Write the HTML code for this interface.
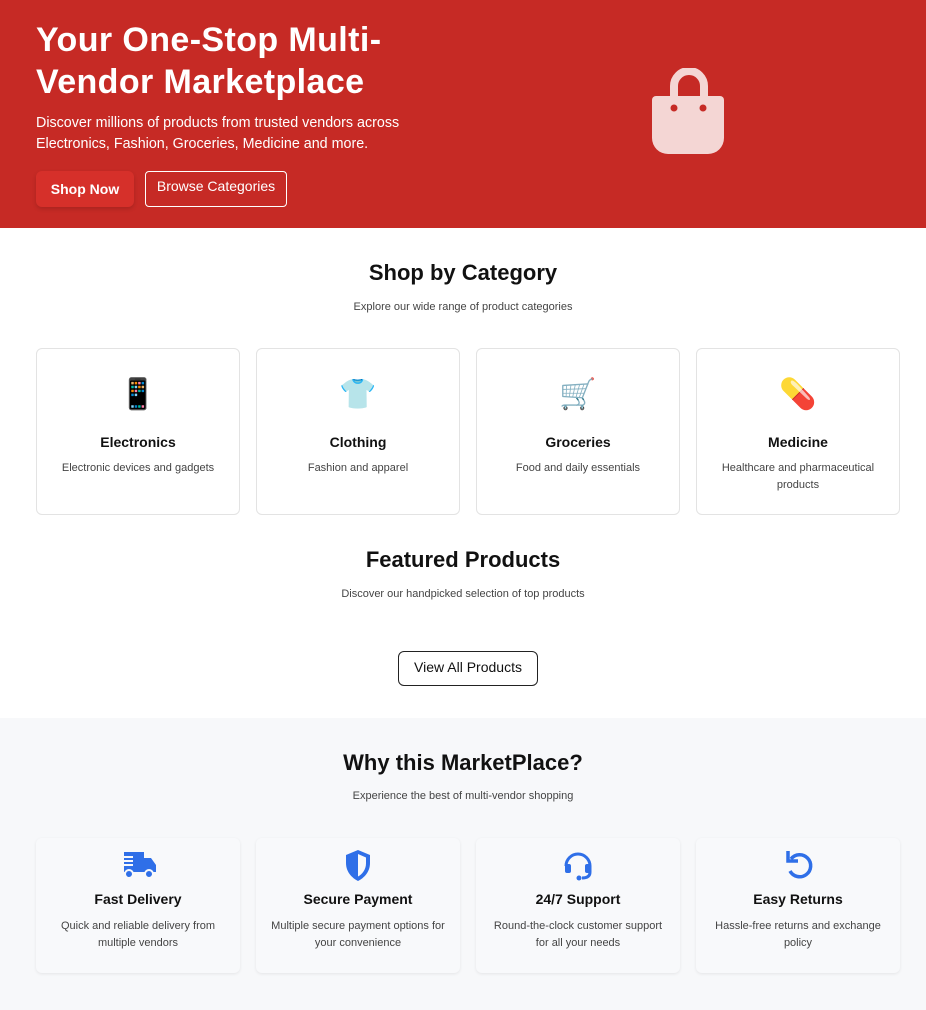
<!DOCTYPE html>
<html><head><meta charset="utf-8"><style>
*{box-sizing:border-box;margin:0;padding:0}
body{width:926px;height:1010px;font-family:"Liberation Sans",sans-serif;background:#fff;color:#111;overflow:hidden}
.hero{height:228px;background:#c62a25;position:relative;color:#fff}
.hero h1{position:absolute;left:36px;top:19px;font-size:34px;line-height:42px;font-weight:700;letter-spacing:0.4px;width:420px}
.hero p{position:absolute;left:36px;top:113px;font-size:14.3px;line-height:21px;width:400px}
.btn1{position:absolute;left:36px;top:171px;width:98px;height:36px;background:#d6302a;border-radius:6px;font-weight:700;font-size:14px;display:flex;align-items:center;justify-content:center;box-shadow:0 2px 4px rgba(0,0,0,.15)}
.btn2{position:absolute;left:145px;top:171px;width:142px;height:36px;border:1.5px solid #fff;border-radius:4px;font-size:14px;display:flex;align-items:center;justify-content:center;padding-bottom:6px}
h2{text-align:center;font-size:22px;font-weight:700;position:absolute;left:0;width:926px}
.sub{text-align:center;font-size:11px;color:#444;position:absolute;left:0;width:926px}
.cat{position:absolute;top:348px;width:204px;height:167px;border:1px solid #e3e3e3;border-radius:6px;text-align:center}
.cat .ic{font-size:30px;margin-top:28px;height:40px;font-family:"DejaVu Sans",sans-serif}
.cat b{display:block;font-size:14px;margin-top:17px;font-weight:600}
.cat span{display:block;font-size:11px;color:#444;margin-top:10px;line-height:17px;padding:0 18px}
.va{position:absolute;left:398px;top:651px;width:140px;height:35px;border:1px solid #222;border-radius:6px;font-size:14px;display:flex;align-items:center;justify-content:center;padding-bottom:4px}
.why{position:absolute;top:718px;left:0;width:926px;height:292px;background:#f7f8fa}
.f{position:absolute;top:838px;width:204px;height:135px;background:#f8f9fb;border-radius:6px;box-shadow:0 1px 3px rgba(0,0,0,.08);text-align:center}
.f svg{margin-top:10px}
.f b{display:block;font-size:14px;margin-top:4px}
.f span{display:block;font-size:11px;color:#444;margin-top:11px;line-height:17px;padding:0 10px}
</style></head><body>
<div class="hero">
<h1>Your One-Stop Multi-Vendor Marketplace</h1>
<p>Discover millions of products from trusted vendors across Electronics, Fashion, Groceries, Medicine and more.</p>
<div class="btn1">Shop Now</div>
<div class="btn2">Browse Categories</div>
<svg style="position:absolute;left:650px;top:68px" width="78" height="88" viewBox="0 0 78 88"><path d="M24 30V18a15 15 0 0 1 30 0v12" fill="none" stroke="#f4d6d4" stroke-width="8"/><path d="M8 28h62a4 4 0 0 1 4 4v38a16 16 0 0 1-16 16H18A16 16 0 0 1 2 70V32a4 4 0 0 1 4-4z" fill="#f4d6d4"/><circle cx="24" cy="40" r="3.5" fill="#c62a25"/><circle cx="53" cy="40" r="3.5" fill="#c62a25"/></svg>
</div>
<h2 style="top:260px">Shop by Category</h2>
<div class="sub" style="top:301px">Explore our wide range of product categories</div>
<div class="cat" style="left:36px"><div class="ic">📱</div><b>Electronics</b><span>Electronic devices and gadgets</span></div>
<div class="cat" style="left:256px"><div class="ic">👕</div><b>Clothing</b><span>Fashion and apparel</span></div>
<div class="cat" style="left:476px"><div class="ic">🛒</div><b>Groceries</b><span>Food and daily essentials</span></div>
<div class="cat" style="left:696px"><div class="ic">💊</div><b>Medicine</b><span>Healthcare and pharmaceutical products</span></div>
<h2 style="top:547px">Featured Products</h2>
<div class="sub" style="top:588px">Discover our handpicked selection of top products</div>
<div class="va">View All Products</div>
<div class="why"></div>
<h2 style="top:750px">Why this MarketPlace?</h2>
<div class="sub" style="top:790px">Experience the best of multi-vendor shopping</div>
<div class="f" style="left:36px"><svg width="40" height="34" viewBox="0 0 40 34"><path d="M6 4h20v20H6zM26 10h7l5 7v7H26z" fill="#2f6fe8"/><circle cx="11" cy="26" r="4" fill="#2f6fe8" stroke="#f8f9fb" stroke-width="2"/><circle cx="31" cy="26" r="4" fill="#2f6fe8" stroke="#f8f9fb" stroke-width="2"/><path d="M1 9h14M1 13h14M1 17h14" stroke="#f8f9fb" stroke-width="2"/></svg><b>Fast Delivery</b><span>Quick and reliable delivery from multiple vendors</span></div>
<div class="f" style="left:256px"><svg width="40" height="34" viewBox="0 0 40 34"><path d="M20 2l12 5v8c0 9-6 15-12 18C14 30 8 24 8 15V7z" fill="#2f6fe8"/><path d="M20 6l8 3.5v6c0 6-4 11-8 13z" fill="#f8f9fb"/></svg><b>Secure Payment</b><span>Multiple secure payment options for your convenience</span></div>
<div class="f" style="left:476px"><svg width="40" height="34" viewBox="0 0 40 34"><path d="M8 18a12 12 0 0 1 24 0v6q0 6-8 6" fill="none" stroke="#2f6fe8" stroke-width="3"/><rect x="7" y="16" width="6" height="9" rx="2" fill="#2f6fe8"/><rect x="27" y="16" width="6" height="9" rx="2" fill="#2f6fe8"/><circle cx="21" cy="30" r="2.5" fill="#2f6fe8"/></svg><b>24/7 Support</b><span>Round-the-clock customer support for all your needs</span></div>
<div class="f" style="left:696px"><svg width="40" height="34" viewBox="0 0 40 34"><path d="M13 11a11 11 0 1 1-1 12" fill="none" stroke="#2f6fe8" stroke-width="3.5"/><path d="M10 3v10h10" fill="none" stroke="#2f6fe8" stroke-width="3.5"/></svg><b>Easy Returns</b><span>Hassle-free returns and exchange policy</span></div>
</body></html>
